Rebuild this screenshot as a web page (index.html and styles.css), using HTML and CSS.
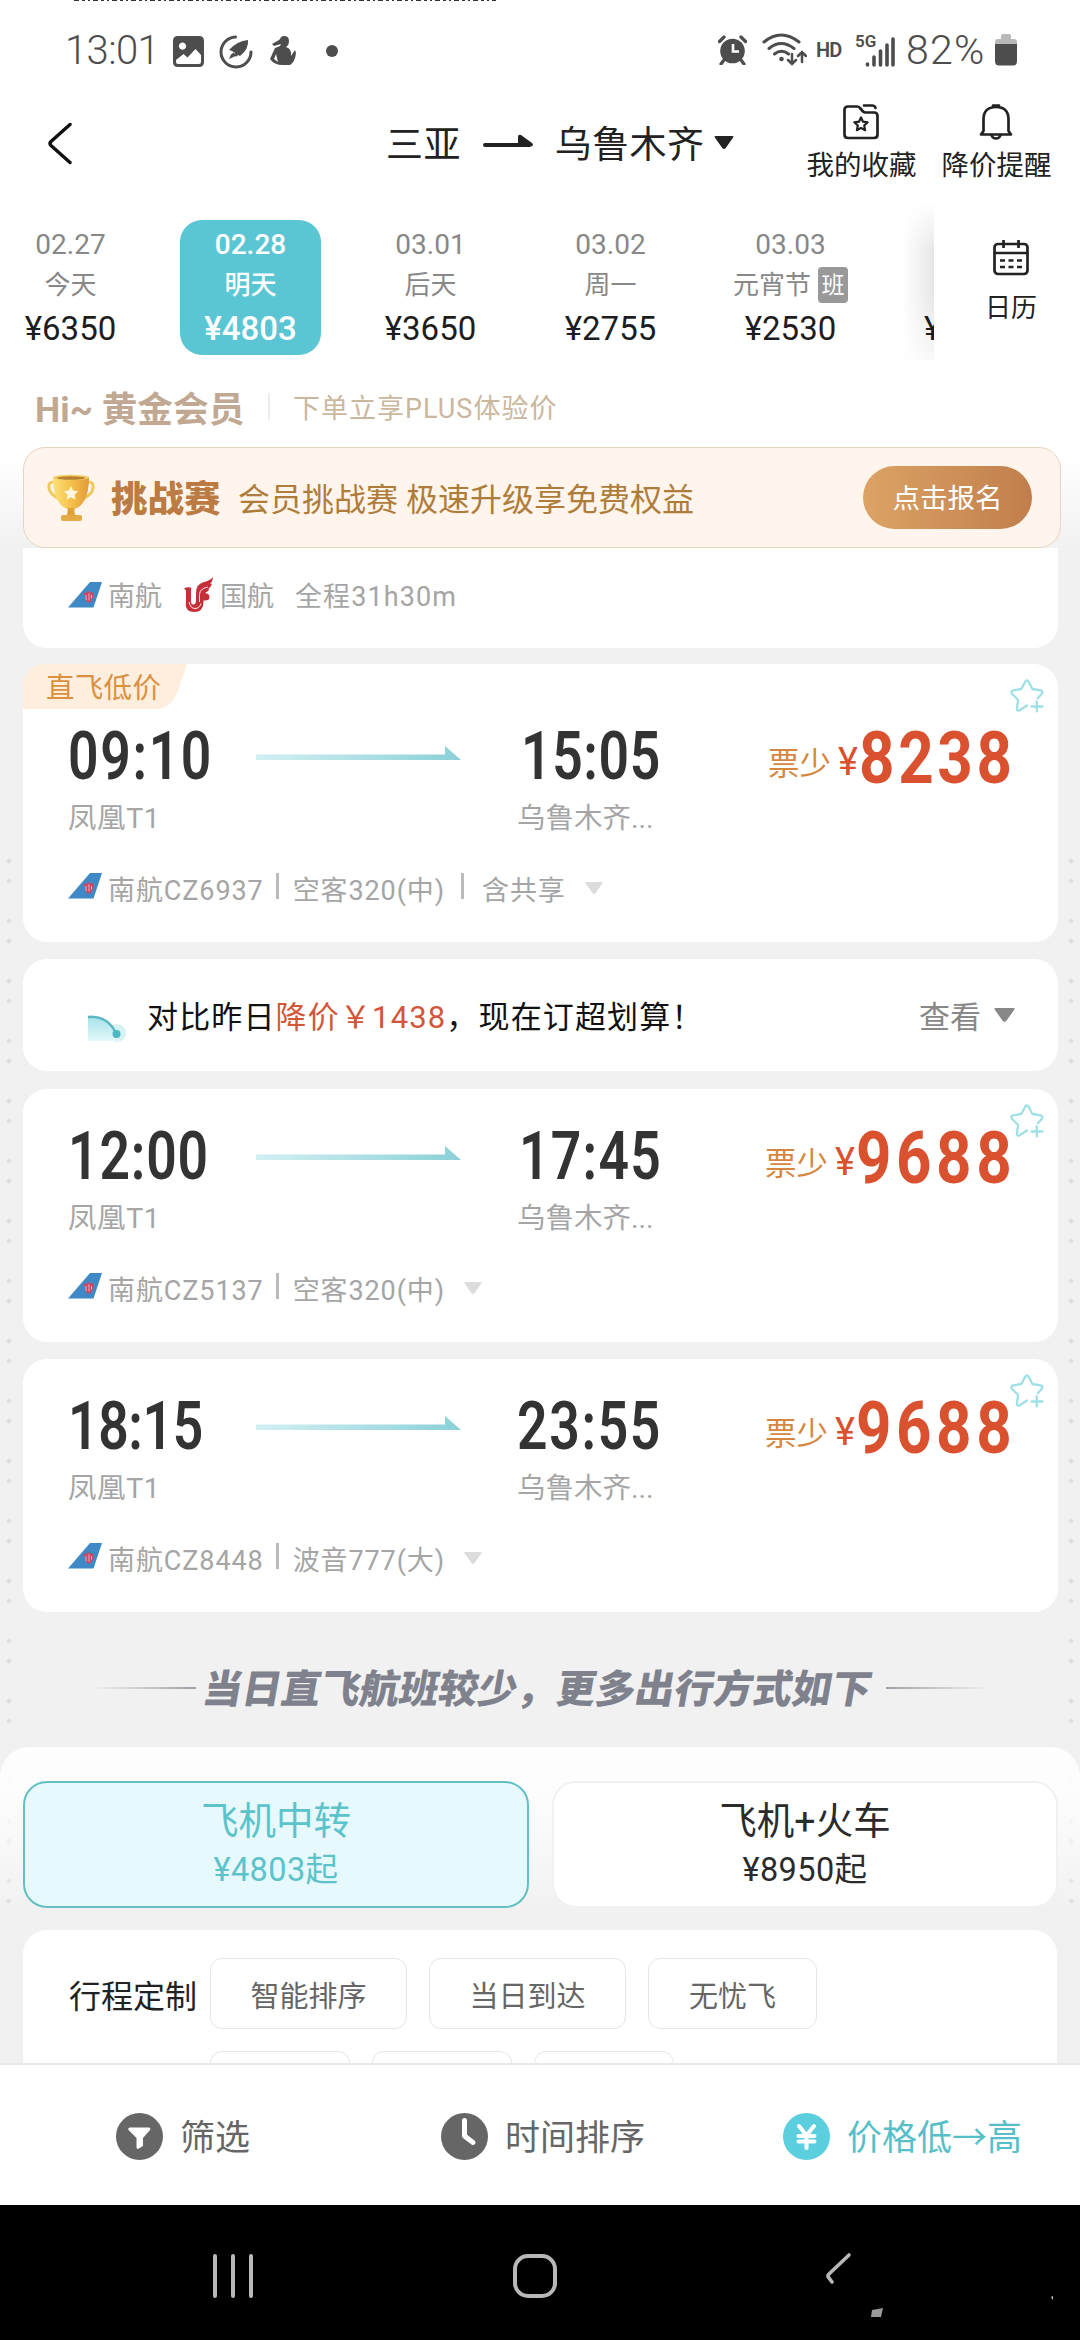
FILE: index.html
```html
<!DOCTYPE html>
<html lang="zh-CN">
<head>
<meta charset="utf-8">
<title>三亚 - 乌鲁木齐</title>
<link rel="stylesheet" href="styles.css">
</head>
<body>
<svg class="defs" width="0" height="0">
  <defs>
    <linearGradient id="gArrow" x1="0" x2="1" y1="0" y2="0"><stop offset="0" stop-color="#d3f0f3"/><stop offset="1" stop-color="#8ad0d8"/></linearGradient>
    <linearGradient id="gCup" x1="0" x2="1" y1="0" y2="0"><stop offset="0" stop-color="#fbe27a"/><stop offset=".5" stop-color="#f6c04a"/><stop offset="1" stop-color="#e39b3a"/></linearGradient>
    <linearGradient id="gTrend" x1="0" x2="0" y1="0" y2="1"><stop offset="0" stop-color="#a5e2e8"/><stop offset="1" stop-color="#e4f8fa"/></linearGradient>
    <symbol id="tail" viewBox="0 0 34 26"><path d="M22 0H34L25.500 25.500H0z" fill="#3f8ac6"/><path d="M15 12q2-2.500 5-1.500l1-2 1.500 2q3-1 3.500 1.500l-1.500 4.500q-1 4-3.800 4t-3.200-4l-.5-3z" fill="#cf4665"/><path d="M18 13v3.500q0 1.500 1 1.500M21 11.500v7M23.500 13v3.500" stroke="#f3b6c6" stroke-width=".9" fill="none"/></symbol>
    <symbol id="arrow" viewBox="0 0 205 14"><path d="M0 8.500H189V0L205 14H0z" fill="url(#gArrow)"/></symbol>
    <symbol id="down" viewBox="0 0 18 12"><path d="M1.500 0h15q2 0 .8 1.600L10.600 11q-1.600 1.800-3.200 0L.7 1.600Q-.5 0 1.500 0z" fill="currentColor"/></symbol>
    <symbol id="fav" viewBox="0 0 34 34"><g fill="none" stroke="#9fe0e6" stroke-width="2.300" stroke-linecap="round" stroke-linejoin="round"><path d="M17 26.500l-7.500 4.800q-2.800 1-2.600-2l1.300-8.300-6.300-6.300q-1.600-2.400 1.200-3.300l8.200-1.400L15.200 2.700q1.700-2.600 3.400 0l3.800 7.300 8.300 1.400q2.700.9 1.100 3.300l-4 4.500"/><path d="M26.800 22.500v10M21.500 27.500h11"/></g></symbol>
  </defs>
</svg>

<header class="statusbar">
  <div class="edge"></div>
  <span class="clock">13:01</span>
  <svg class="s-photo" width="31" height="32" viewBox="0 0 31 32"><path fill-rule="evenodd" fill="#4d4d4d" d="M5 0h21q5 0 5 5v21q0 5-5 5H5q-5 0-5-5V5q0-5 5-5zm4.500 6.500a3.600 3.600 0 1 0 .01 0zM3 26q0 2 2 2h21q2 0 2-2v-7l-5.500-6-8 8.500-4-3.500L3 24z"/></svg>
  <svg class="s-rocket" width="34" height="34" viewBox="0 0 34 34"><path d="M16.500 2A15 15 0 1 0 32 17" fill="none" stroke="#4d4d4d" stroke-width="3" stroke-linecap="round"/><path d="M29 5q1 9-8 16l-2-1-2 2-1-4-3-2-3-1q8-9 19-10zM14.500 17.500l3 3-3 1.500-4.500 2 2-4.500z" fill="#4d4d4d"/></svg>
  <svg class="s-person" width="26" height="32" viewBox="0 0 26 32"><path d="M14 1q5 0 5 5 0 4-3 6 6 2 5 9l4-6 1 3q-1 9-6 12h-7Q4 30 0 24l5-11 5-2 1-2-7 2-2-2 7-4 1-1q1-3 4-3zM6 19l-2 5 4 3z" fill="#4d4d4d" fill-rule="evenodd"/></svg>
  <span class="s-dot"></span>
  <span class="s-spacer"></span>
  <svg class="s-alarm" width="29" height="30" viewBox="0 0 29 30"><circle cx="14.500" cy="16" r="12.300" fill="#4d4d4d"/><path d="M1.500 6.500L6 2M27.500 6.500L23 2M6 25l-3 4M23 25l3 4" stroke="#4d4d4d" stroke-width="3.200" stroke-linecap="round"/><path d="M15 9v7.500h6" stroke="#fff" stroke-width="2.600" fill="none"/></svg>
  <svg class="s-wifi" width="45" height="34" viewBox="0 0 45 34"><g fill="none" stroke="#4d4d4d" stroke-width="3" stroke-linecap="round"><path d="M2 9q17-14 35 0M7 15.500q12-10 25 0M12.500 21q7-5.500 14 0"/><path d="M30 21v10m-4-4l4 4 4-4M40 29V19m-4 4l4-4 4 4" stroke-width="2.500"/></g><circle cx="19.500" cy="26" r="2.300" fill="#4d4d4d"/></svg>
  <span class="s-hd">HD</span>
  <span class="s-net"><b>5G</b><svg width="30" height="30" viewBox="0 0 30 30"><path d="M2.500 27v1M9 20v8M15.500 14v14M22 8v20M28 2v26" stroke="#4d4d4d" stroke-width="3.600" stroke-linecap="round"/></svg></span>
  <span class="s-pct">82%</span>
  <svg class="s-bat" width="22" height="32" viewBox="0 0 22 32"><path d="M0 10V8q0-3 3-3h3V2q0-2 2-2h6q2 0 2 2v3h3q3 0 3 3v2z" fill="#b9b9b9"/><path d="M0 10h22v17q0 4.500-4 4.500H4Q0 31.500 0 27z" fill="#4d4d4d"/></svg>
</header>

<nav class="titlebar">
  <svg class="back" width="26" height="44" viewBox="0 0 26 44"><path d="M23 2.500L4 19.500q-2 2 0 4L23 40.500" fill="none" stroke="#111" stroke-width="3.400" stroke-linecap="round"/></svg>
  <div class="route">
    <span>三亚</span>
    <svg width="50" height="14" viewBox="0 0 50 14"><path d="M2 9h33V3q0-3 3-2l11 8q2 2 0 3l-2 1H2q-2 0-2-2t2-2z" fill="#222"/></svg>
    <span>乌鲁木齐</span>
    <svg class="tri" width="20" height="13"><use href="#down"/></svg>
  </div>
  <div class="tool fav-tool">
    <svg width="36" height="36" viewBox="0 0 36 36"><g fill="none" stroke="#222" stroke-width="2.700" stroke-linejoin="round" stroke-linecap="round"><path d="M5 2.500h9q2 0 3 1.500l3 3.500q1 1 3 1h8q3.500 0 3.500 3.500v18.500q0 3.500-3.500 3.500H5q-3.500 0-3.500-3.500V6Q1.500 2.500 5 2.500zM21 1.500h8q3 0 3.500 2.500"/><path d="M18 13.500l2 4.200 4.700.6-3.500 3.200.9 4.700-4.100-2.300-4.100 2.300.9-4.700-3.500-3.200 4.700-.6z" stroke-width="2.200"/></g></svg>
    <span>我的收藏</span>
  </div>
  <div class="tool">
    <svg width="34" height="36" viewBox="0 0 34 36"><g fill="none" stroke="#222" stroke-width="2.700" stroke-linecap="round" stroke-linejoin="round"><path d="M4.500 27V15.500Q4.500 3 17 3t12.500 12.500V27l2.500 3.500H2z"/><path d="M14 1.600h6M12.500 31q1 3.500 4.500 3.500t4.500-3.500"/></g></svg>
    <span>降价提醒</span>
  </div>
</nav>

<section class="dates">
  <div class="strip">
    <div class="day"><span>02.27</span><em>今天</em><strong>¥6350</strong></div>
    <div class="day on"><span>02.28</span><em>明天</em><strong>¥4803</strong></div>
    <div class="day"><span>03.01</span><em>后天</em><strong>¥3650</strong></div>
    <div class="day"><span>03.02</span><em>周一</em><strong>¥2755</strong></div>
    <div class="day"><span>03.03</span><em>元宵节<i>班</i></em><strong>¥2530</strong></div>
    <div class="day next"><strong>¥</strong></div>
  </div>
  <div class="calendar">
    <svg width="36" height="37" viewBox="0 0 36 37"><g fill="none" stroke="#222" stroke-width="2.700"><rect x="1.500" y="5" width="33" height="30" rx="3.500"/><path d="M2 14h32M10.500 1v8M25.500 1v8"/><path d="M7 21.500h5M15.500 21.500h5M24 21.500h5M7 28h5M15.500 28h5M24 28h5"/></g></svg>
    <span>日历</span>
  </div>
</section>

<main class="content">
  <div class="member"><b>Hi~ 黄金会员</b><i></i><span>下单立享PLUS体验价</span></div>

  <div class="banner">
    <svg class="cup" width="48" height="48" viewBox="0 0 48 48"><path d="M8 8Q1 7 2 14t11 11M40 8q7-1 6 6T35 25" fill="none" stroke="#f0c95f" stroke-width="3"/><path d="M6 3h36q0 30-18 33Q6 33 6 3z" fill="url(#gCup)"/><ellipse cx="24" cy="3.500" rx="18" ry="2.800" fill="#f2cf68"/><ellipse cx="24" cy="4" rx="14" ry="1.700" fill="#b98232"/><path d="M21 34h6l1 7h-8z" fill="#dfa03a"/><rect x="14" y="41" width="21" height="6" rx="2" fill="#e4ab45"/><path d="M24 12l2.200 4.600 5 .7-3.700 3.400 1 5.100-4.500-2.500-4.500 2.500 1-5.100-3.700-3.400 5-.7z" fill="#fff7df"/></svg>
    <b>挑战赛</b>
    <span class="banner-text">会员挑战赛 极速升级享免费权益</span>
    <span class="join">点击报名</span>
  </div>

  <article class="card transfer">
    <svg width="34" height="26"><use href="#tail"/></svg><span class="cz">南航</span>
    <svg class="ca" width="31" height="35" viewBox="0 0 31 35"><path d="M1 11.500q3-2 7-1V24q0 3.500 2.300 3.500t2.700-3.500v-8Q13 7 21 5q6-1.500 9-5-.5 5-3 7 1.500-.3 2-.6-1.500 4.500-4.500 5.600l2-.3q-1 3-4.500 4.300 4.500.5 4.500 4 0 4-6 3.500v1.500q0 10-9.500 10T3 24V13.500z" fill="#c52f38"/><path d="M10.500 11.500v12M16.500 25v-7.500q.3-6 8.300-7.500M6 25q1.500 6.500 6 6.500t6-5" fill="none" stroke="#fff" stroke-width=".9"/></svg><span class="gh">国航</span>
    <span class="total">全程31h30m</span>
  </article>

  <article class="card flight first">
    <div class="tag"><span>直飞低价</span></div>
    <svg class="fav" width="34" height="34"><use href="#fav"/></svg>
    <div class="grid">
      <svg class="t" width="143" height="48"><text transform="scale(.81 1)" x="0" y="46" textLength="177">09:10</text></svg>
      <svg class="arw" width="205" height="14"><use href="#arrow"/></svg>
      <svg class="t" width="139" height="48"><text transform="scale(.81 1)" x="0" y="46" textLength="172">15:05</text></svg>
      <div class="price"><span>票少</span><b>¥</b><svg width="152" height="54"><text transform="scale(.86 1)" x="0" y="51" textLength="178">8238</text></svg></div>
    </div>
    <div class="ports"><span>凤凰T1</span><span>乌鲁木齐...</span></div>
    <div class="info"><svg width="34" height="26"><use href="#tail"/></svg><span class="no">南航CZ6937</span><i></i><span>空客320(中)</span><i class="wide"></i><span>含共享</span><svg class="more" width="18" height="12"><use href="#down"/></svg></div>
  </article>

  <article class="card notice">
    <svg class="trend" width="40" height="30" viewBox="0 0 40 30"><circle cx="29" cy="19" r="9" fill="#d5f2f4"/><path d="M0 3q20-2 28 16l4 8H0z" fill="url(#gTrend)"/><path d="M0 3q19-2 28 16" fill="none" stroke="#5ab8c2" stroke-width="2.600"/><circle cx="28.500" cy="20" r="4" fill="#4bb8c4"/></svg>
    <p>对比昨日<b>降价￥1438</b>，现在订超划算！</p>
    <span>查看</span>
    <svg class="tri" width="21" height="14" viewBox="0 0 18 12"><use href="#down"/></svg>
  </article>

  <article class="card flight">
    <svg class="fav" width="34" height="34"><use href="#fav"/></svg>
    <div class="grid">
      <svg class="t" width="140" height="48"><text transform="scale(.81 1)" x="0" y="46" textLength="173">12:00</text></svg>
      <svg class="arw" width="205" height="14"><use href="#arrow"/></svg>
      <svg class="t" width="141" height="48"><text transform="scale(.81 1)" x="0" y="46" textLength="175">17:45</text></svg>
      <div class="price"><span>票少</span><b>¥</b><svg width="155" height="54"><text transform="scale(.86 1)" x="0" y="51" textLength="181">9688</text></svg></div>
    </div>
    <div class="ports"><span>凤凰T1</span><span>乌鲁木齐...</span></div>
    <div class="info"><svg width="34" height="26"><use href="#tail"/></svg><span class="no">南航CZ5137</span><i></i><span>空客320(中)</span><svg class="more" width="18" height="12"><use href="#down"/></svg></div>
  </article>

  <article class="card flight">
    <svg class="fav" width="34" height="34"><use href="#fav"/></svg>
    <div class="grid">
      <svg class="t" width="135" height="48"><text transform="scale(.81 1)" x="0" y="46" textLength="167">18:15</text></svg>
      <svg class="arw" width="205" height="14"><use href="#arrow"/></svg>
      <svg class="t" width="143" height="48"><text transform="scale(.81 1)" x="0" y="46" textLength="177">23:55</text></svg>
      <div class="price"><span>票少</span><b>¥</b><svg width="155" height="54"><text transform="scale(.86 1)" x="0" y="51" textLength="181">9688</text></svg></div>
    </div>
    <div class="ports"><span>凤凰T1</span><span>乌鲁木齐...</span></div>
    <div class="info"><svg width="34" height="26"><use href="#tail"/></svg><span class="no">南航CZ8448</span><i></i><span>波音777(大)</span><svg class="more" width="18" height="12"><use href="#down"/></svg></div>
  </article>

  <h2 class="divider"><i></i><span>当日直飞航班较少，更多出行方式如下</span><i class="r"></i></h2>

  <section class="options">
    <div class="tabs">
      <div class="tab on"><b>飞机中转</b><span>¥4803起</span></div>
      <div class="tab"><b>飞机+火车</b><span>¥8950起</span></div>
    </div>
    <div class="filters">
      <div class="frow"><label>行程定制</label><span class="w1">智能排序</span><span class="w1">当日到达</span><span class="w2">无忧飞</span></div>
      <div class="frow second"><span></span><span></span><span></span></div>
    </div>
  </section>
</main>

<footer class="sort">
  <div class="s1"><svg width="47" height="47" viewBox="0 0 47 47"><circle cx="23.500" cy="23.500" r="23.500" fill="#666"/><path d="M14 14.500h19q2 .5 1 2.500l-7 8v8l-5 3q-1.500 0-1.500-2v-9l-8-8q-1-2 1.500-2.500z" fill="#fff"/></svg><span>筛选</span></div>
  <div class="s2"><svg width="47" height="47" viewBox="0 0 47 47"><circle cx="23.500" cy="23.500" r="23.500" fill="#666"/><path d="M23.500 7.500V23l8.500 6.500" fill="none" stroke="#fff" stroke-width="5" stroke-linecap="round" stroke-linejoin="round"/></svg><span>时间排序</span></div>
  <div class="s3"><svg width="47" height="47" viewBox="0 0 47 47"><circle cx="23.500" cy="23.500" r="23.500" fill="#5bcfde"/><path d="M16 13l7.500 9.500L31 13M15.500 23h16M15.500 28.500h16M23.500 23v12" fill="none" stroke="#fff" stroke-width="4" stroke-linecap="round"/></svg><span>价格低→高</span></div>
</footer>

<div class="sysnav">
  <svg width="1080" height="135" viewBox="0 0 1080 135"><g fill="none" stroke="#b8b8b8" stroke-linecap="round"><path d="M215 51v40M233 51v40M251 51v40" stroke-width="4"/><rect x="515" y="51" width="40" height="40" rx="13" stroke-width="4"/><path d="M849 50L829 69q-2 2 0 4l3 4" stroke-width="3.600"/></g><path d="M872 105l11-2-2 9h-10z" fill="#999"/><path d="M1051 92l2-1v4z" fill="#ccc"/></svg>
</div>
</body>
</html>
```
FILE: styles.css
```css
* { box-sizing: border-box; }
body {
  margin: 0;
  width: 1080px;
  height: 2340px;
  overflow: hidden;
  background: #fff;
  color: #222;
  font-family: Roboto, "Noto Sans CJK SC", sans-serif;
  font-weight: 400;
  display: flex;
  flex-direction: column;
}
svg { display: block; flex: none; }
i, em { font-style: normal; }
span, b, em, strong, label, p { white-space: nowrap; }
.defs { position: absolute; }

.statusbar {
  position: relative;
  height: 100px;
  display: flex;
  align-items: center;
  padding: 0 63px 0 65px;
  color: #4d4d4d;
}
.edge {
  position: absolute;
  left: 74px;
  top: 0;
  width: 422px;
  height: 1px;
  background: repeating-linear-gradient(90deg, #333 0 5px, #fff 5px 8px, #333 8px 11px, #fff 11px 14px, #333 14px 16px, #fff 16px 19px);
}
.clock { font-size: 40px; font-weight: 300; width: 108px; letter-spacing: -.6px; }
.s-photo { margin-top: 4px; }
.s-rocket { margin: 4px 0 0 15px; }
.s-person { margin: 2px 0 0 17px; }
.s-dot { width: 12px; height: 12px; border-radius: 50%; background: #4d4d4d; margin-left: 30px; margin-top: 2px; }
.s-spacer { flex: 1; }
.s-wifi { margin-left: 15px; }
.s-hd { font-size: 20px; font-weight: 600; margin-left: 9px; width: 28px; letter-spacing: -1px; }
.s-net { position: relative; width: 40px; height: 34px; margin-left: 11px; display: flex; justify-content: flex-end; align-items: flex-end; }
.s-net b { position: absolute; left: 0; top: 0; font-size: 17px; line-height: 17px; font-weight: 600; }
.s-pct { font-size: 41px; font-weight: 300; width: 82px; margin-left: 11px; letter-spacing: 1.300px; }
.s-bat { margin-left: 7px; }

.titlebar { height: 100px; display: flex; align-items: flex-start; padding: 0 25px 0 47px; }
.back { margin-top: 22px; }
.route { display: flex; align-items: center; height: 48px; margin: 18px 71px 0 313px; font-size: 37px; letter-spacing: .4px; }
.route svg { margin: -2px 22px 0 22px; }
.route .tri { margin: 0 0 0 10px; width: 20px; overflow: visible; }
.tool { display: flex; flex-direction: column; align-items: center; width: 112px; padding-top: 4px; font-size: 27.500px; line-height: 36px; }
.tool span { margin-top: 8px; }
.fav-tool { margin-right: 23px; }

.dates { height: 160px; display: flex; overflow: hidden; padding-top: 3px; }
.strip { flex: 1; width: 934px; overflow: hidden; display: flex; position: relative; padding-top: 17px; }
.strip::after { content: ""; position: absolute; right: 0; top: 0; bottom: 0; width: 32px; background: linear-gradient(90deg, #fff0, #00000018); mask-image: linear-gradient(#0000, #000 30%, #000 60%, #0004); }
.day { flex: none; width: 141px; height: 135px; margin-right: 39px; display: flex; flex-direction: column; align-items: center; color: #888; }
.day.on { background: #5bc6d3; color: #fff; border-radius: 22px; font-weight: 500; }
.day span { font-size: 28px; line-height: 32px; height: 32px; margin-top: 9px; }
.day em { font-size: 26px; line-height: 36px; height: 36px; margin-top: 6px; display: flex; align-items: center; gap: 7px; }
.day em i { background: #999; color: #fff; font-size: 23px; line-height: 38px; height: 36px; width: 30px; text-align: center; border-radius: 4px; }
.day strong { font-size: 33px; font-weight: 400; line-height: 40px; margin-top: 6px; color: #1d1d1d; }
.day.on strong { color: #fff; font-weight: 500; }
.day.next { align-items: flex-start; padding-left: 24px; }
.day.next strong { margin-top: 89px; }
.calendar { width: 146px; background: #fff; display: flex; flex-direction: column; align-items: center; padding: 36px 0 0 8px; font-size: 26px; }
.calendar svg { margin-bottom: 11px; margin-left: -1px; }

.content {
  position: relative;
  isolation: isolate;
  height: 1703px;
  overflow: hidden;
  background: linear-gradient(#fff 95px, #f1f1f1 190px);
}
.content::before {
  content: "";
  position: absolute;
  z-index: -1;
  inset: 496px 0 140px 0;
  background:
    radial-gradient(circle at 9px 5px, #dfdfdf 0 1.500px, #0000 3px) 0 0 / 1080px 60px,
    radial-gradient(circle at 9px 25px, #dfdfdf 0 1.500px, #0000 3px) 0 0 / 1080px 60px,
    radial-gradient(circle at 1071px 5px, #dfdfdf 0 1.500px, #0000 3px) 0 0 / 1080px 60px,
    radial-gradient(circle at 1071px 25px, #dfdfdf 0 1.500px, #0000 3px) 0 0 / 1080px 60px;
}
.member { height: 87px; padding: 5px 0 0 35px; display: flex; align-items: center; color: #c6b096; background: #fff; }
.member b { font-size: 35.700px; color: #c1a892; width: 233px; }
.member i { width: 2px; height: 27px; background: #ededed; margin-right: 23px; }
.member span { font-size: 27px; letter-spacing: 1px; color: #cbb79e; }
.banner {
  height: 101px;
  width: 1038px;
  margin-left: 23px;
  border: 1.500px solid #e9d4c0;
  border-radius: 22px;
  background: #fff5ec;
  display: flex;
  align-items: center;
  padding: 0 28px 0 23px;
  color: #af7d3b;
}
.banner b { font-size: 36.500px; font-weight: 900; color: #bb7b42; margin: -2px 0 0 16px; width: 127px; }
.banner-text { font-size: 32px; flex: 1; margin-top: -2px; }
.join { width: 169px; height: 63px; border-radius: 32px; background: linear-gradient(90deg, #dca365, #c17e4c); color: #fff; font-size: 27.500px; line-height: 65px; text-align: center; margin-top: -1px; }

.card { position: relative; width: 1035px; margin: 0 0 17px 23px; background: #fff; border-radius: 24px; color: #a5a5a5; font-size: 27px; }
.transfer { height: 100px; border-radius: 0 0 24px 24px; display: flex; align-items: center; padding: 0 0 7px 45px; margin-bottom: 16px; }
.transfer .cz { margin: 0 21px 0 6px; }
.transfer .gh { margin: 0 21px 0 6px; }
.transfer .total { letter-spacing: 1.100px; }
.flight { height: 253px; padding: 43px 50px 0 45px; }
.flight.first { height: 278px; padding-top: 68px; }
.tag { position: absolute; left: 0; top: 0; width: 164px; height: 45px; background: #fdeedd; clip-path: path("M24 0H164L156 24Q149 45 133 45H0V24Q0 0 24 0z"); color: #dc9140; font-size: 28.500px; line-height: 49px; padding-left: 23px; letter-spacing: .3px; }
.fav { position: absolute; right: 14px; top: 15px; }
.grid { display: grid; grid-template-columns: 188px 205px 194px 1fr; height: 47px; align-items: end; }
.t { overflow: visible; }
.t text { font-size: 66px; font-weight: 600; fill: #333; }
.t:nth-child(3) { justify-self: end; margin-right: -5px; }
.arw { margin-bottom: 21px; }
.price { display: flex; justify-content: flex-end; align-items: flex-end; margin: 0 -3px -5px 0; color: #d9512f; height: 54px; }
.price span { font-size: 31.500px; line-height: 46px; color: #d6873f; margin: 0 7px -2px 0; }
.price b { font-size: 38px; line-height: 48px; font-weight: 400; margin-right: 1px; }
.price svg { overflow: visible; }
.price text { font-size: 72px; font-weight: 700; fill: #d9512f; }
.ports { display: grid; grid-template-columns: 449px 1fr; height: 34px; line-height: 34px; margin-top: 23px; font-size: 28.500px; }
.ports span:first-child { letter-spacing: .6px; }
.info { height: 34px; display: flex; align-items: center; margin-top: 35px; letter-spacing: .9px; }
.info svg:first-child { margin-top: -4px; }
.info .no { margin-left: 6px; }
.info i { width: 3px; height: 26px; background: #bbb; margin: -4px 14px 0 12px; }
.info i.wide { margin: -4px 18px 0 16px; }
.more { margin-left: 19px; color: #dcdcdc; }
.notice { height: 112px; display: flex; align-items: center; padding: 0 43px 2px 65px; margin-bottom: 18px; }
.trend { margin-top: 29px; }
.notice p { margin: 0 0 0 19px; flex: 1; font-size: 31px; color: #111; letter-spacing: 1.150px; }
.notice p b { font-weight: 400; color: #d1563a; }
.notice span { font-size: 31px; color: #888; }
.notice .tri { color: #888; margin: 2px 0 0 13px; }

.divider { height: 135px; margin: -17px 0 0; padding: 0 90px 0 92px; display: flex; align-items: center; justify-content: space-between; color: #7f828d; font-size: 39.300px; font-weight: 900; }
.divider span { transform: translateX(-3px) skewX(-10deg); margin-top: 11px; }
.divider i { width: 104px; height: 2px; margin-top: 17px; background: linear-gradient(90deg, #aaaab200, #a0a2ab); }
.divider i.r { transform: scaleX(-1); }

.options { height: 400px; border-radius: 30px 30px 0 0; background: linear-gradient(#ffffffee, #ffffffcc 60px, #f1f1f100 165px); padding: 34px 22px 0 23px; }
.tabs { display: flex; gap: 23px; }
.tab { flex: 1; height: 127px; border-radius: 24px; background: #fff; border: 2px solid #f1f1f3; display: flex; flex-direction: column; align-items: center; padding-top: 13px; color: #2b2b2b; }
.tab b { font-weight: 400; font-size: 37.500px; line-height: 50px; }
.tab span { font-size: 32.500px; line-height: 40px; margin-top: 4px; letter-spacing: .4px; }
.tab.on { background: #e7f9fc; border-color: #62c0c5; color: #5cc3cb; }
.filters { background: #fff; border-radius: 24px; margin: 22px 1px 0 0; height: 300px; padding: 28px 46px; }
.frow { display: flex; align-items: center; height: 71px; gap: 22px; }
.frow label { font-size: 32px; width: 119px; color: #222; }
.frow span { height: 71px; border: 1.500px solid #e6e6e6; border-radius: 12px; text-align: center; line-height: 77px; font-size: 29px; color: #666; width: 140px; }
.frow .w1 { width: 197px; }
.frow .w2 { width: 169px; }
.frow.second { margin-top: 22px; padding-left: 141px; }

.sort { height: 142px; flex: none; background: #fff; border-top: 2px solid #e9e9e9; display: flex; align-items: center; padding: 2px 0 0 116px; font-size: 35px; color: #666; }
.sort div { display: flex; align-items: center; gap: 17px; }
.sort span { margin-top: -3px; }
.s1 { width: 325px; }
.s2 { width: 342px; }
.sort .s3 { color: #56bfc9; }
.sysnav { height: 135px; flex: none; background: #000; }
```
